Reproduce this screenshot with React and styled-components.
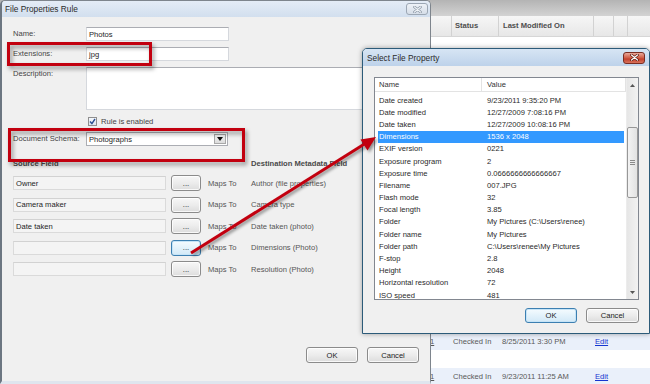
import React from 'react';
import styled, { createGlobalStyle, css } from 'styled-components';

const font = `"Liberation Sans", Arial, sans-serif`;

const GlobalStyle = createGlobalStyle`
  html, body { margin: 0; padding: 0; background: #fff; }
  body { font-family: ${font}; font-size: 7.6px; color: #333; }
  * { box-sizing: border-box; }
`;

const Desktop = styled.div`
  position: relative;
  width: 650px;
  height: 384px;
  overflow: hidden;
  background: #fff;
`;

/* library page behind the dialogs */

const cols = '426px 25px 47px 95px 20px 14px 1fr';

const Library = styled.div`
  display: flex;
  flex-direction: column;
  height: 100%;
`;

const Ribbon = styled.div`
  flex: none;
  height: 16px;
  background: linear-gradient(#b4b4b4, #d3d3d3);
`;

const ListHead = styled.div`
  flex: none;
  display: grid;
  grid-template-columns: ${cols};
  height: 20.5px;
  background: linear-gradient(#f6f6f6, #e7e7e7);
  border-bottom: 1px solid #d6d6d6;
  font-weight: bold;
  color: #4d4d4d;
`;

const HeadCell = styled.div`
  display: flex;
  align-items: center;
  padding-left: ${p => p.$pad ?? 4}px;
  border-left: 1px solid #d2d2d2;
  white-space: nowrap;
`;

const ListRow = styled.div`
  flex: none;
  display: grid;
  grid-template-columns: ${cols};
  height: 17.44px;
  align-items: center;
  background: ${p => (p.$alt ? '#eaf0fa' : '#fff')};
  color: #585858;
`;

const Cell = styled.div`
  padding-left: ${p => p.$pad ?? 4}px;
  white-space: nowrap;
`;

const Link = styled.span`
  color: ${p => (p.$blue ? '#1636d0' : 'inherit')};
  text-decoration: underline;
`;

/* windows */

const Window = styled.div`
  position: absolute;
  left: ${p => p.$x}px;
  top: ${p => p.$y}px;
  width: ${p => p.$w}px;
  height: ${p => p.$h}px;
  display: flex;
  flex-direction: column;
  background: #f0f0f0;
  border-radius: 5px 5px 0 0;
  overflow: hidden;
  ${p =>
    p.$active
      ? css`
          border: 1px solid #2c5b79;
          box-shadow: 0 0 5px rgba(0, 0, 0, 0.35);
        `
      : css`
          border: 1px solid #7e858d;
          border-left: 2px solid #6c7681;
          border-bottom: 3px solid #dfe5ee;
        `}
`;

const TitleBar = styled.div`
  flex: none;
  height: ${p => (p.$active ? 17 : 16)}px;
  display: flex;
  align-items: center;
  justify-content: space-between;
  padding: 0 ${p => (p.$active ? 4 : 2)}px 0 ${p => (p.$active ? 4 : 3)}px;
  background: ${p =>
    p.$active
      ? 'linear-gradient(#d7e5f4, #bdd2ea)'
      : 'linear-gradient(#e4ecf6, #d2dfee)'};
  font-size: 8.3px;
  color: #2b2b2b;
`;

const CloseButton = styled.div`
  width: 22px;
  height: 12px;
  border-radius: 3px;
  display: flex;
  align-items: center;
  justify-content: center;
  ${p =>
    p.$active
      ? css`
          background: linear-gradient(#e9a899, #cf5a43 50%, #c2402c 60%, #d9735c);
          border: 1px solid #7a2d22;
        `
      : css`
          background: linear-gradient(#eef2f7, #d6dee8);
          border: 1px solid #9ca7b4;
        `}
`;

const CloseGlyph = ({ active }) => (
  <svg width="9" height="7" viewBox="0 0 9 7">
    <path
      d="M1.5 1 L7.5 6 M7.5 1 L1.5 6"
      stroke={active ? '#5a1a12' : '#8a96a4'}
      strokeWidth="2.6"
      strokeLinecap="round"
    />
    <path
      d="M1.5 1 L7.5 6 M7.5 1 L1.5 6"
      stroke={active ? '#fff' : '#eef2f6'}
      strokeWidth="1.2"
      strokeLinecap="round"
    />
  </svg>
);

/* rule dialog */

const RuleBody = styled.div`
  flex: 1;
  display: flex;
  flex-direction: column;
  padding: 10px 11px 18px 11px;
`;

const FormGrid = styled.div`
  display: grid;
  grid-template-columns: 73px 1fr;
  row-gap: 6px;
  align-items: start;
`;

const Label = styled.div`
  line-height: 14px;
  color: #444;
  white-space: nowrap;
`;

const TextBox = styled.div`
  width: ${p => p.$w}px;
  height: ${p => p.$h ?? 14}px;
  display: flex;
  align-items: ${p => (p.$multi ? 'flex-start' : 'center')};
  padding: 0 2px;
  background: ${p => (p.$dim ? '#f4f4f4' : '#fff')};
  border: 1px solid ${p => (p.$dim ? '#dadada' : '#d5d8dd')};
  border-top-color: ${p => (p.$dim ? '#d2d2d2' : '#abadb3')};
  color: #1e1e1e;
  white-space: nowrap;
`;

const CheckRow = styled.div`
  grid-column: 2;
  display: flex;
  align-items: center;
  height: 10px;
  padding-left: 2px;
  gap: 4px;
  color: #444;
`;

const CheckBox = styled.div`
  width: 9px;
  height: 9px;
  border: 1px solid #8f8f8f;
  background: linear-gradient(#f4f7fb, #dfe6ef);
  display: flex;
  align-items: center;
  justify-content: center;
`;

const Select = styled.div`
  width: 142px;
  height: 14px;
  display: flex;
  align-items: stretch;
  background: #fff;
  border: 1px solid #abadb3;
  color: #1e1e1e;
`;

const SelectText = styled.div`
  flex: 1;
  display: flex;
  align-items: center;
  padding-left: 2px;
`;

const SelectArrow = styled.div`
  width: 12px;
  margin: 1px;
  display: flex;
  align-items: center;
  justify-content: center;
  background: linear-gradient(#f3f3f3, #dcdcdc);
  border: 1px solid #a8a8a8;
`;

const MapHead = styled.div`
  display: grid;
  grid-template-columns: 238px 1fr;
  margin-top: 12px;
  line-height: 12px;
  font-weight: bold;
  color: #4a4a4a;
  white-space: nowrap;
`;

const MapGrid = styled.div`
  display: grid;
  grid-template-columns: 158px 37px 43px 1fr;
  grid-auto-rows: 16px;
  row-gap: 5.5px;
  align-items: center;
  margin-top: 5px;
  color: #555;
  white-space: nowrap;
`;

const PushButton = styled.div`
  width: ${p => p.$w}px;
  height: ${p => p.$h ?? 16}px;
  display: flex;
  align-items: center;
  justify-content: center;
  border-radius: 3px;
  color: #222;
  ${p =>
    p.$focus
      ? css`
          border: 1px solid #3c7fb1;
          background: linear-gradient(#f5fbfe, #e3f2fb 50%, #d2e9f7);
          box-shadow: inset 0 0 0 1px #c6e4f7;
        `
      : css`
          border: 1px solid #8b8b8b;
          background: linear-gradient(#f7f7f7, #ececec 50%, #dcdcdc);
          box-shadow: inset 0 0 0 1px rgba(255, 255, 255, 0.8);
        `}
`;

const ButtonRow = styled.div`
  display: flex;
  justify-content: flex-end;
  gap: 9px;
  margin-top: ${p => (p.$auto ? 'auto' : '8px')};
`;

/* select property dialog */

const PickBody = styled.div`
  flex: 1;
  display: flex;
  flex-direction: column;
  padding: 11px 10px 10px 11px;
`;

const ListBox = styled.div`
  flex: none;
  height: 223px;
  display: flex;
  background: #fff;
  border: 1px solid #828790;
  overflow: hidden;
`;

const ListContent = styled.div`
  flex: 1;
  display: flex;
  flex-direction: column;
  overflow: hidden;
`;

const PropHead = styled.div`
  flex: none;
  display: grid;
  grid-template-columns: 107px 1fr;
  height: 14px;
  margin-bottom: 2px;
  border-bottom: 1px solid #e3e3e3;
  color: #333;
`;

const PropHeadCell = styled.div`
  display: flex;
  align-items: center;
  padding-left: ${p => p.$pad}px;
  border-right: 1px solid #e3e3e3;
`;

const PropRow = styled.div`
  flex: none;
  display: grid;
  grid-template-columns: 107px 1fr;
  height: 12.2px;
  align-items: center;
  white-space: nowrap;
  color: ${p => (p.$selected ? '#fff' : '#2a2a2a')};
  background: ${p =>
    p.$selected
      ? 'linear-gradient(to right, transparent 3px, #3399ff 3px, #3399ff calc(100% - 2px), transparent calc(100% - 2px))'
      : 'transparent'};
`;

const PropCell = styled.div`
  padding-left: ${p => p.$pad}px;
`;

const ScrollBar = styled.div`
  flex: none;
  width: 12px;
  display: flex;
  flex-direction: column;
  background: linear-gradient(to right, #e6e6e6, #f2f2f2);
  border-left: 1px solid #ececec;
`;

const ScrollArrow = styled.div`
  flex: none;
  height: 14px;
  display: flex;
  align-items: center;
  justify-content: center;
`;

const Thumb = styled.div`
  flex: none;
  height: 71px;
  margin: 35px 0 0 0;
  border: 1px solid #979797;
  border-radius: 2px;
  background: linear-gradient(to right, #f3f3f3, #e2e2e2);
  display: flex;
  align-items: center;
  justify-content: center;
`;

const Grip = styled.div`
  width: 5px;
  height: 5px;
  background: repeating-linear-gradient(#8a8a8a 0 1px, transparent 1px 2px);
`;

const Spacer = styled.div`
  flex: 1;
`;

/* callouts */

const Callout = styled.div`
  position: absolute;
  left: ${p => p.$x}px;
  top: ${p => p.$y}px;
  width: ${p => p.$w}px;
  height: ${p => p.$h}px;
  border: 3px solid #c2000f;
  filter: drop-shadow(2px 3px 2px rgba(0, 0, 0, 0.4));
  pointer-events: none;
`;

const ArrowLayer = styled.svg`
  position: absolute;
  left: 0;
  top: 0;
  pointer-events: none;
  filter: drop-shadow(2px 2px 1.5px rgba(0, 0, 0, 0.4));
`;

const mappings = [
  ['Owner', 'Author (file properties)'],
  ['Camera maker', 'Camera type'],
  ['Date taken', 'Date taken (photo)'],
  ['', 'Dimensions (Photo)'],
  ['', 'Resolution (Photo)'],
];

const properties = [
  ['Date created', '9/23/2011 9:35:20 PM'],
  ['Date modified', '12/27/2009 7:08:16 PM'],
  ['Date taken', '12/27/2009 10:08:16 PM'],
  ['Dimensions', '1536 x 2048'],
  ['EXIF version', '0221'],
  ['Exposure program', '2'],
  ['Exposure time', '0.0666666666666667'],
  ['Filename', '007.JPG'],
  ['Flash mode', '32'],
  ['Focal length', '3.85'],
  ['Folder', 'My Pictures (C:\\Users\\renee)'],
  ['Folder name', 'My Pictures'],
  ['Folder path', 'C:\\Users\\renee\\My Pictures'],
  ['F-stop', '2.8'],
  ['Height', '2048'],
  ['Horizontal resolution', '72'],
  ['ISO speed', '481'],
];

const docs = { 17: '8/25/2011 3:30 PM', 19: '9/23/2011 11:25 AM' };

export default function App() {
  return (
    <>
      <GlobalStyle />
      <Desktop>
        <Library>
          <Ribbon />
          <ListHead>
            <HeadCell />
            <HeadCell />
            <HeadCell $pad={3}>Status</HeadCell>
            <HeadCell>Last Modified On</HeadCell>
            <HeadCell />
            <HeadCell />
            <HeadCell />
          </ListHead>
          {Array.from({ length: 20 }, (_, i) => (
            <ListRow key={i} $alt={i % 2 === 1}>
              <Cell />
              {docs[i] ? (
                <>
                  <Cell><Link>1</Link></Cell>
                  <Cell $pad={2}>Checked In</Cell>
                  <Cell>{docs[i]}</Cell>
                  <Cell $pad={2}><Link $blue>Edit</Link></Cell>
                </>
              ) : null}
            </ListRow>
          ))}
        </Library>

        <Window $x={0} $y={0} $w={431} $h={384}>
          <TitleBar>
            <span>File Properties Rule</span>
            <CloseButton><CloseGlyph /></CloseButton>
          </TitleBar>
          <RuleBody>
            <FormGrid>
              <Label>Name:</Label>
              <TextBox $w={143}>Photos</TextBox>
              <Label>Extensions:</Label>
              <TextBox $w={143}>jpg</TextBox>
              <Label>Description:</Label>
              <TextBox $w={334} $h={43} $multi />
              <CheckRow>
                <CheckBox>
                  <svg width="7" height="7" viewBox="0 0 7 7">
                    <path d="M1 3.6 L2.9 5.6 L6 1" fill="none" stroke="#2b4f91" strokeWidth="1.4" />
                  </svg>
                </CheckBox>
                <span>Rule is enabled</span>
              </CheckRow>
              <Label>Document Schema:</Label>
              <Select>
                <SelectText>Photographs</SelectText>
                <SelectArrow>
                  <svg width="6" height="4" viewBox="0 0 6 4">
                    <path d="M0 0 H6 L3 4 Z" fill="#111" />
                  </svg>
                </SelectArrow>
              </Select>
            </FormGrid>

            <MapHead>
              <span>Source Field</span>
              <span>Destination Metadata Field</span>
            </MapHead>
            <MapGrid>
              {mappings.map(([src, dst], i) => (
                <React.Fragment key={i}>
                  <TextBox $w={153} $dim>{src}</TextBox>
                  <PushButton $w={30} $focus={i === 3}>...</PushButton>
                  <span>Maps To</span>
                  <span>{dst}</span>
                </React.Fragment>
              ))}
            </MapGrid>

            <ButtonRow $auto>
              <PushButton $w={52}>OK</PushButton>
              <PushButton $w={52}>Cancel</PushButton>
            </ButtonRow>
          </RuleBody>
        </Window>

        <Callout $x={7} $y={42} $w={145} $h={24} />
        <Callout $x={8} $y={128} $w={237} $h={34} />

        <Window $x={362} $y={48} $w={288} $h={286} $active>
          <TitleBar $active>
            <span>Select File Property</span>
            <CloseButton $active><CloseGlyph active /></CloseButton>
          </TitleBar>
          <PickBody>
            <ListBox>
              <ListContent>
                <PropHead>
                  <PropHeadCell $pad={4}>Name</PropHeadCell>
                  <PropHeadCell $pad={5}>Value</PropHeadCell>
                </PropHead>
                {properties.map(([name, value]) => (
                  <PropRow key={name} $selected={name === 'Dimensions'}>
                    <PropCell $pad={4}>{name}</PropCell>
                    <PropCell $pad={5}>{value}</PropCell>
                  </PropRow>
                ))}
              </ListContent>
              <ScrollBar>
                <ScrollArrow>
                  <svg width="5" height="3" viewBox="0 0 5 3"><path d="M0 3 L2.5 0 L5 3 Z" fill="#555" /></svg>
                </ScrollArrow>
                <Thumb><Grip /></Thumb>
                <Spacer />
                <ScrollArrow>
                  <svg width="5" height="3" viewBox="0 0 5 3"><path d="M0 0 L2.5 3 L5 0 Z" fill="#555" /></svg>
                </ScrollArrow>
              </ScrollBar>
            </ListBox>
            <ButtonRow>
              <PushButton $w={52} $h={15} $focus>OK</PushButton>
              <PushButton $w={53} $h={15}>Cancel</PushButton>
            </ButtonRow>
          </PickBody>
        </Window>

        <ArrowLayer width="650" height="384" viewBox="0 0 650 384">
          <line x1="191" y1="253" x2="366" y2="143" stroke="#c2000f" strokeWidth="3" />
          <polygon points="376,137 367.5,150.5 360.5,139.5" fill="#c2000f" />
        </ArrowLayer>
      </Desktop>
    </>
  );
}
